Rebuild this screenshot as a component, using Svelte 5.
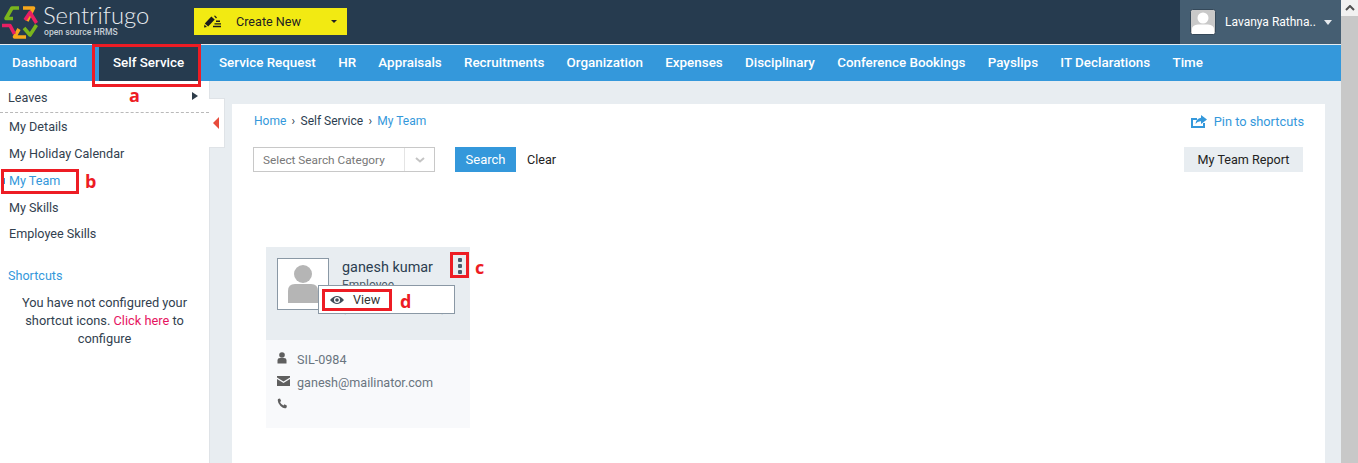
<script>
  const navItems = ['Service Request', 'HR', 'Appraisals', 'Recruitments', 'Organization', 'Expenses', 'Disciplinary', 'Conference Bookings', 'Payslips', 'IT Declarations', 'Time']
  const sideItems = ['My Details', 'My Holiday Calendar', 'My Team', 'My Skills', 'Employee Skills']
</script>

<div class="page">
  <div class="window">
    <header class="top">
      <div class="brand">
        <svg class="logo" width="38" height="38" viewBox="0 0 38 38" fill="none" stroke-width="3.6" stroke-linejoin="round">
          <path d="M19 6 H12 L6 16.500 H13" stroke="#7ab51d" />
          <path d="M23 6 H33.500 L27 19" stroke="#f7a81b" />
          <path d="M25 18 L30 10.500 L36.500 21" stroke="#ea1f63" />
          <path d="M36.500 23 L30 33 L24 26" stroke="#7ab51d" />
          <path d="M26 35 H14.500 L19 27" stroke="#f7a81b" />
          <path d="M2 23.500 H10 L14.500 32" stroke="#ea1f63" />
        </svg>
        <div class="wordmark">
          <span class="name">Sentrifugo</span>
          <span class="tag">open source HRMS</span>
        </div>
      </div>
      <button class="create">
        <svg width="17" height="13" viewBox="0 0 17 13">
          <path d="M2.500 10 L9 3" stroke="#1c1c1c" stroke-width="4.600" fill="none" />
          <path d="M10 1 L11 0.500 L13 2.500 L12 3.500 Z M0 12.500 L0.500 9.500 L3 12 Z" fill="#1c1c1c" />
          <path d="M9 12.200 H17 V10.800 H9 Z M10.500 9.600 H17 V8.200 H10.500 Z M12 7 H16 V5.600 H12 Z" fill="#1c1c1c" />
        </svg>
        <span>Create New</span>
        <i class="caret dark"></i>
      </button>
      <div class="user">
        <svg class="avatar" width="26" height="26" viewBox="0 0 26 26">
          <rect x="0.5" y="0.5" width="25" height="25" rx="2" fill="#c9c9c9" stroke="#35495a" />
          <circle cx="13" cy="9" r="5.5" fill="#fff" />
          <path d="M2 25 V20 Q2 16 8 15.5 H18 Q24 16 24 20 V25 Z" fill="#fff" />
        </svg>
        <span>Lavanya Rathna..</span>
        <i class="caret light"></i>
      </div>
    </header>

    <nav class="menu">
      <a class="dash" href="#a">Dashboard</a>
      <a class="active" href="#a">Self Service</a>
      <div class="rest">
        {#each navItems as item}
          <a href="#a">{item}</a>
        {/each}
      </div>
    </nav>

    <div class="body">
      <aside class="side">
        <div class="leaves"><span>Leaves</span><i class="tri"></i></div>
        <ul>
          {#each sideItems as item}
            <li class:on={item === 'My Team'}>{item}</li>
          {/each}
        </ul>
        <div class="short">Shortcuts</div>
        <p>You have not configured your shortcut icons. <em>Click here</em> to configure</p>
      </aside>

      <main class="panel">
        <div class="crumbs">
          <div>
            <a href="#a">Home</a><b>›</b><span>Self Service</span><b>›</b><a href="#a">My Team</a>
          </div>
          <a class="pin" href="#a">
            <svg width="16" height="13" viewBox="0 0 16 13"><path d="M0 3 H6 V5 H2 V11 H12 V8 H14 V13 H0 Z" fill="#3498db" /><path d="M10 0 L16 4.500 L10 9 V6.300 Q6.500 6 4.500 9 Q5 3.500 10 2.800 Z" fill="#3498db" /></svg>
            Pin to shortcuts
          </a>
        </div>
        <div class="filters">
          <div class="select">
            <span>Select Search Category</span>
            <div class="chev"><svg width="10" height="6" viewBox="0 0 10 6"><path d="M1 1 L5 4.500 L9 1" fill="none" stroke="#c4c4c4" stroke-width="2" /></svg></div>
          </div>
          <button class="search">Search</button>
          <span class="clear">Clear</span>
          <button class="report">My Team Report</button>
        </div>

        <article class="card">
          <div class="card-top">
            <div class="photo">
              <svg width="30" height="38" viewBox="0 0 30 38"><circle cx="15" cy="9" r="9" fill="#b5b5b5" /><path d="M0 38 V26 Q0 19 7 19 H23 Q30 19 30 26 V38 Z" fill="#b5b5b5" /></svg>
            </div>
            <div class="who">
              <h3>ganesh kumar</h3>
              <div class="role">Employee</div>
              <div class="dept">(Software/Hardware)</div>
            </div>
            <div class="dots"><i></i><i></i><i></i></div>
            <div class="pop">
              <svg width="14" height="10" viewBox="0 0 14 10"><path d="M0 5 Q7 -3 14 5 Q7 13 0 5 Z M7 2 A3 3 0 1 0 7 8 A3 3 0 1 0 7 2 Z" fill="#3f4d59" fill-rule="evenodd" /><circle cx="7" cy="5" r="1.800" fill="#3f4d59" /></svg>
              <span>View</span>
            </div>
          </div>
          <div class="card-info">
            <div class="row">
              <svg width="13" height="12" viewBox="0 0 13 12" ><circle cx="5" cy="3" r="2.800" fill="#5f5f5f" /><path d="M0.500 11.500 V8 Q0.500 6 3 6 H7 Q9.500 6 9.500 8 V11.500 Z" fill="#5f5f5f" /></svg>
              <span>SIL-0984</span>
            </div>
            <div class="row mail">
              <svg width="13" height="10" viewBox="0 0 13 10"><path d="M0 0 H13 V1.500 L6.500 5.500 L0 1.500 Z M0 3 L6.500 7 L13 3 V10 H0 Z" fill="#5f5f5f" /></svg>
              <span>ganesh@mailinator.com</span>
            </div>
            <div class="row">
              <svg width="13" height="11" viewBox="0 0 13 11"><path d="M1 1 L3 0.500 L4.200 3 L3 4 Q4 6.500 6.500 7.500 L7.500 6.300 L10 7.700 L9.300 10 Q7 11.300 3.500 8 Q0 4.500 1 1 Z" fill="#5f5f5f" /></svg>
            </div>
          </div>
        </article>
      </main>
    </div>

    <!-- red tutorial marks drawn over the screenshot -->
    <div class="mark m-a"></div><span class="letter l-a">a</span>
    <div class="mark m-b"></div><span class="letter l-b">b</span>
    <div class="mark m-c"></div><span class="letter l-c">c</span>
    <div class="mark m-d"></div><span class="letter l-d">d</span>

    <div class="tab"><i></i></div>
  </div>

  <div class="scroll">
    <div class="up"><svg width="10" height="6" viewBox="0 0 10 6"><path d="M1 5 L5 1 L9 5" fill="none" stroke="#505050" stroke-width="2" /></svg></div>
  </div>
</div>

<style>
  :global(body) { margin: 0; overflow: hidden; background: #fff; }
  .page { display: flex; height: 463px; font-family: Roboto, sans-serif; font-size: 12.600px; color: #2c3e50; }
  .window { position: relative; flex: 1; display: flex; flex-direction: column; min-width: 0; background: #e8edf1; overflow: hidden; }
  .top { height: 45px; flex: none; box-sizing: border-box; display: flex; align-items: stretch; background: #263b4f; border-bottom: 1px solid #e8edf1; }
  .brand { width: 194px; display: flex; gap: 5px; padding-top: 2px; box-sizing: border-box; }
  .wordmark { display: flex; flex-direction: column; color: #e6eaee; padding-top: 1px; }
  .name { font-family: Lato, sans-serif; font-weight: 300; font-size: 23.800px; line-height: 25px; }
  .tag { font-size: 8.600px; line-height: 9px; font-weight: 500; color: #c4cdd5; margin-left: 1px; }
  .create { margin-top: 8px; width: 153px; height: 27px; border: 0; padding: 0 10px; background: #f2ea12; display: flex; align-items: center; font: 12.600px Roboto, sans-serif; color: #222; }
  .create span { margin-left: 15px; flex: 1; text-align: left; }
  .caret { display: block; width: 0; height: 0; border-left: 3.500px solid transparent; border-right: 3.500px solid transparent; }
  .caret.dark { border-top: 3.500px solid #222; }
  .caret.light { border-top: 5px solid #e6eaee; border-left-width: 4px; border-right-width: 4px; }
  .user { margin-left: auto; width: 161px; box-sizing: border-box; padding-left: 10px; display: flex; align-items: center; background: #455e72; color: #fff; font-size: 12px; font-weight: 400; }
  .user span { margin-left: 9px; }
  .user .caret { margin-left: 8px; }
  .menu { height: 36px; flex: none; display: flex; align-items: stretch; background: #3498db; font-weight: 500; font-size: 13.400px; }
  .menu a { color: #fff; text-decoration: none; display: flex; align-items: center; padding-bottom: 2px; box-sizing: border-box; }
  .dash { width: 95px; padding-left: 12px; }
  .menu .active { width: 103px; margin-right: 21px; padding-left: 14px; background: #263b4f; border-left: 4px solid #3498db; }
  .rest { display: flex; gap: 22.300px; }
  .body { flex: 1; display: flex; min-height: 0; }
  .side { width: 210px; flex: none; box-sizing: border-box; background: #fff; border-right: 1px solid #dfe3e7; }
  .leaves { height: 32px; box-sizing: border-box; border-bottom: 1px dashed #b9b9b9; padding: 2px 11px 0 8px; display: flex; justify-content: space-between; align-items: center; color: #32414f; }
  .tri { width: 0; height: 0; border-left: 6px solid #2e3c49; border-top: 4px solid transparent; border-bottom: 4px solid transparent; margin-top: -4px; }
  ul { list-style: none; margin: 0; padding: 1.200px 0 0; }
  li { height: 26.800px; line-height: 26px; padding-left: 9px; color: #32414f; position: relative; }
  li.on { color: #3498db; }
  li.on::before { content: ''; position: absolute; left: 2px; top: 10px; width: 3px; height: 6px; background: #3498db; }
  .short { margin: 20px 0 0 8px; color: #3498db; line-height: 16px; }
  .side p { margin: 10px 13px 0; text-align: center; line-height: 18px; color: #32414f; font-size: 12.800px; }
  .side em { font-style: normal; color: #e6145f; }
  .panel { width: 1093px; margin: 23px 0 0 22px; box-sizing: border-box; background: #fff; padding: 0 22px 0 22px; }
  .crumbs { height: 34px; display: flex; justify-content: space-between; align-items: center; font-size: 12px; }
  .crumbs a { color: #3498db; text-decoration: none; }
  .crumbs b { font-weight: 400; margin: 0 5.300px; }
  .pin { display: flex; align-items: center; gap: 7px; font-size: 12.800px; margin-right: -1px; }
  .filters { margin-top: 9px; display: flex; align-items: center; height: 25px; }
  .select { width: 182px; height: 25px; box-sizing: border-box; margin-left: -1px; border: 1px solid #c8c8c8; display: flex; align-items: center; color: #787878; font-size: 11.800px; }
  .select span { flex: 1; padding-left: 9px; }
  .chev { width: 30px; height: 100%; box-sizing: border-box; border-left: 1px solid #e4e4e4; display: flex; align-items: center; justify-content: center; }
  .search { margin-left: 20px; width: 61px; height: 25px; border: 0; background: #3498db; color: #fff; font: 13px Roboto, sans-serif; }
  .clear { margin-left: 11px; color: #222; }
  .report { margin-left: auto; margin-right: 0; width: 119px; height: 25px; border: 0; background: #e8edf1; color: #222; font: 12.600px Roboto, sans-serif; }
  .card { width: 204px; margin: 75px 0 0 12px; }
  .card-top { position: relative; height: 93px; background: #e8edf1; display: flex; padding: 11px 0 0 11px; box-sizing: border-box; }
  .photo { border: 1px solid #8a98a5; display: flex; align-items: flex-end; justify-content: center; padding-bottom: 6px; box-sizing: border-box; width: 52px; height: 52px; background: #fff; }
  .who { margin-left: 13px; padding-top: 1px; }
  h3 { margin: 0; font-size: 14.400px; font-weight: 400; line-height: 18px; color: #2c3e50; }
  .role { line-height: 17px; color: #4a5a68; font-size: 12px; }
  .dept { margin-top: 8px; font-size: 11px; line-height: 13px; color: #7d8791; }
  .dots { position: absolute; left: 191.500px; top: 11px; display: flex; flex-direction: column; gap: 2px; }
  .dots i { width: 4px; height: 4px; border-radius: 1px; background: #485c6e; }
  .pop { position: absolute; left: 52px; top: 38px; width: 137px; height: 29px; box-sizing: border-box; background: #fff; border: 1px solid #8a98a5; display: flex; align-items: center; padding-left: 11px; gap: 9px; color: #333; }
  .card-info { height: 88px; background: #f8f9fb; padding: 12px 11px 0; box-sizing: border-box; }
  .row { display: flex; align-items: flex-start; height: 23px; gap: 7px; color: #6a757f; line-height: 16px; }
  .row svg { flex: none; }
  .row.mail svg { margin-top: 1px; }
  .mark { position: absolute; border: 3px solid #ed1c24; box-sizing: border-box; }
  .m-a { left: 92px; top: 44px; width: 109px; height: 43px; }
  .m-b { left: 1px; top: 169px; width: 78px; height: 25px; }
  .m-c { left: 450px; top: 252px; width: 19px; height: 26px; }
  .m-d { left: 322px; top: 289px; width: 70px; height: 22px; }
  .letter { position: absolute; color: #ed1c24; font: 700 18px "Open Sans", sans-serif; line-height: 20px; }
  .l-a { left: 129px; top: 85px; }
  .l-b { left: 85px; top: 171px; }
  .l-c { left: 475px; top: 257px; }
  .l-d { left: 400px; top: 291px; }
  .tab { position: absolute; left: 209px; top: 98px; width: 16px; height: 50px; box-sizing: border-box; background: #fff; border: 1px solid #dfe3e7; border-left: 0; display: flex; align-items: center; justify-content: center; }
  .tab i { width: 0; height: 0; border-right: 6px solid #e74c3c; border-top: 6px solid transparent; border-bottom: 6px solid transparent; margin-left: -2px; }
  .scroll { width: 17px; flex: none; background: #c8c8c8; }
  .up { height: 16px; background: #f1f1f1; display: flex; align-items: center; justify-content: center; }
</style>
